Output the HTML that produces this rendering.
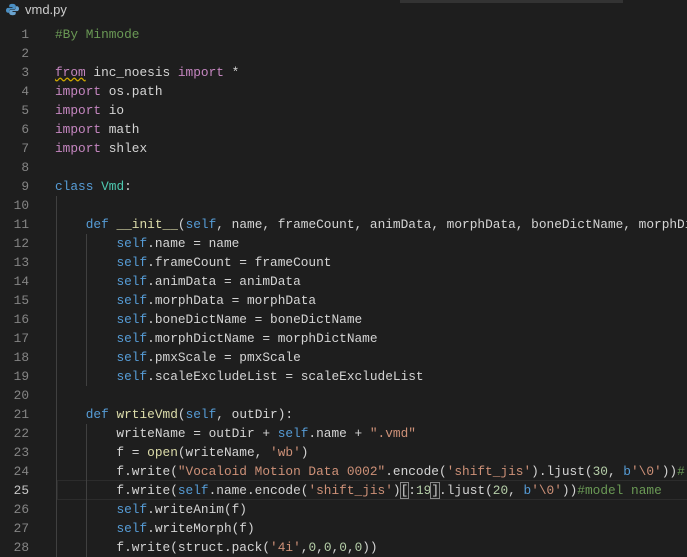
<!DOCTYPE html>
<html><head><style>
body{margin:0;width:687px;height:557px;overflow:hidden;background:#1e1e1e;font-family:"Liberation Mono",monospace;font-size:12.8px;color:#d4d4d4;position:relative}
.tabtxt{position:absolute;left:25px;top:2px;font-family:"Liberation Sans",sans-serif;font-size:13px;color:#cccccc}
.ln{position:absolute;left:0;width:29px;text-align:right;color:#858585;height:19px;line-height:19px}
.code{position:absolute;left:55px;width:632px;overflow:hidden;white-space:pre;height:19px;line-height:19px}
.k{color:#c586c0}.b{color:#569cd6}.c{color:#6a9955}.s{color:#ce9178}.f{color:#dcdcaa}.t{color:#4ec9b0}.n{color:#b5cea8}
.g{position:absolute;width:1px;background:#404040}
</style></head><body>
<div style="position:absolute;left:400px;top:0;width:223px;height:3px;background:#333"></div>
<svg style="position:absolute;left:6px;top:3px" width="13" height="13" viewBox="0 0 16 16"><path d="M8 1C4 1 4 2.5 4 3.5V5h4v1H2.5C1 6 0 7.3 0 9s1 3 2.5 3H4v-2c0-1.3 1-2.3 2.3-2.3h3.4C11 7.7 12 6.7 12 5.5V3.5C12 2 10.5 1 8 1z" fill="#4a8fc4"/><path d="M8 15c4 0 4-1.5 4-2.5V11H8v-1h5.5c1.5 0 2.5-1.3 2.5-3s-1-3-2.5-3H12v2c0 1.3-1 2.3-2.3 2.3H6.3C5 8.3 4 9.3 4 10.5v2C4 14 5.5 15 8 15z" fill="#6aa3cf"/></svg>
<div class="tabtxt">vmd.py</div>
<div style="position:absolute;left:57px;top:480px;width:630px;height:18px;border:1px solid #2c2c2c"></div>
<div class="g" style="left:56px;top:196px;height:361px"></div>
<div class="g" style="left:86px;top:234px;height:152px"></div>
<div class="g" style="left:86px;top:424px;height:133px"></div>
<div id="l"></div>
<script>
var L=[
'<span class="c">#By Minmode</span>','',
'<span class="k" style="text-decoration:underline wavy #cca700">from</span> inc_noesis <span class="k">import</span> *',
'<span class="k">import</span> os.path','<span class="k">import</span> io','<span class="k">import</span> math','<span class="k">import</span> shlex','',
'<span class="b">class</span> <span class="t">Vmd</span>:','',
'    <span class="b">def</span> <span class="f">__init__</span>(<span class="b">self</span>, name, frameCount, animData, morphData, boneDictName, morphDictName',
'        <span class="b">self</span>.name = name',
'        <span class="b">self</span>.frameCount = frameCount',
'        <span class="b">self</span>.animData = animData',
'        <span class="b">self</span>.morphData = morphData',
'        <span class="b">self</span>.boneDictName = boneDictName',
'        <span class="b">self</span>.morphDictName = morphDictName',
'        <span class="b">self</span>.pmxScale = pmxScale',
'        <span class="b">self</span>.scaleExcludeList = scaleExcludeList','',
'    <span class="b">def</span> <span class="f">wrtieVmd</span>(<span class="b">self</span>, outDir):',
'        writeName = outDir + <span class="b">self</span>.name + <span class="s">".vmd"</span>',
'        f = <span class="f">open</span>(writeName, <span class="s">\'wb\'</span>)',
'        f.write(<span class="s">"Vocaloid Motion Data 0002"</span>.encode(<span class="s">\'shift_jis\'</span>).ljust(<span class="n">30</span>, <span class="b">b</span><span class="s">\'\\0\'</span>))<span class="c">#</span>',
'        f.write(<span class="b">self</span>.name.encode(<span class="s">\'shift_jis\'</span>)<span style="outline:1px solid #888">[</span>:<span class="n">19</span><span style="outline:1px solid #888">]</span>.ljust(<span class="n">20</span>, <span class="b">b</span><span class="s">\'\\0\'</span>))<span class="c">#model name</span>',
'        <span class="b">self</span>.writeAnim(f)',
'        <span class="b">self</span>.writeMorph(f)',
'        f.write(struct.pack(<span class="s">\'4i\'</span>,<span class="n">0</span>,<span class="n">0</span>,<span class="n">0</span>,<span class="n">0</span>))'];
var h='';for(var i=0;i<L.length;i++){var t=24.5+i*19;h+='<div class="ln" style="top:'+t+'px;'+(i==24?'color:#c6c6c6':'')+'">'+(i+1)+'</div><div class="code" style="top:'+t+'px">'+L[i]+'</div>';}
document.getElementById('l').innerHTML=h;
</script>
</body></html>
